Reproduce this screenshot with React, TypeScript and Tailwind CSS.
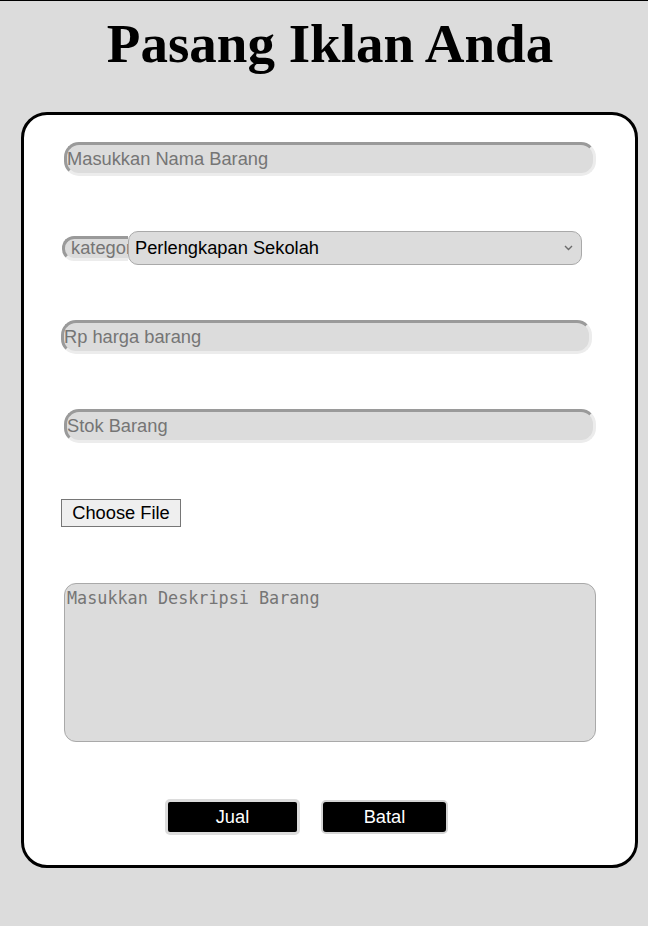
import React from "react";

const inset =
  "border-[3px] border-t-[#9a9a9a] border-l-[#9a9a9a] border-b-[#ececec] border-r-[#ececec] bg-[#dcdcdc] outline-none placeholder:text-[#757575] text-black";

export default function App() {
  return (
    <div className="w-[648px] h-[926px] bg-[#dcdcdc] border-t border-black flex flex-col" style={{ fontFamily: '"Liberation Sans", Arial, sans-serif' }}>
      <h1
        className="mt-[13px] pl-[12px] text-center text-[55px] font-bold leading-[60px] text-black"
        style={{ fontFamily: '"Liberation Serif", "Times New Roman", serif' }}
      >
        Pasang Iklan Anda
      </h1>
      <div className="mt-[38px] ml-[21px] w-[617px] h-[756px] bg-white border-[3px] border-black rounded-[26px] flex flex-col">
        <input
          className={`mt-[27px] ml-[40px] w-[532px] h-[34px] rounded-[15px] px-0 text-[18.3px] ${inset}`}
          placeholder="Masukkan Nama Barang"
        />
        <div className="mt-[55px] ml-[38px] flex items-center h-[34px]">
          <input
            className={`w-[66px] h-[25px] rounded-l-[12px] border-r-0 pl-[6px] text-[18.3px] ${inset}`}
            placeholder="kategori"
          />
          <div className="relative">
            <select
              className="appearance-none w-[454px] h-[34px] border border-[#a9a9a9] rounded-[10px] bg-[#dcdcdc] pl-[6px] text-[18.3px] text-black outline-none"
              defaultValue="Perlengkapan Sekolah"
            >
              <option>Perlengkapan Sekolah</option>
              <option>Elektronik</option>
              <option>Pakaian</option>
            </select>
            <svg className="absolute right-[9px] top-[14px] pointer-events-none" width="9" height="6" viewBox="0 0 9 6">
              <path d="M1 1 L4.5 4.5 L8 1" fill="none" stroke="#6b6b6b" strokeWidth="1.4" />
            </svg>
          </div>
        </div>
        <input
          className={`mt-[55px] ml-[37px] w-[531px] h-[34px] rounded-[15px] px-0 text-[18.3px] ${inset}`}
          placeholder="Rp harga barang"
        />
        <input
          className={`mt-[55px] ml-[40px] w-[532px] h-[34px] rounded-[15px] px-0 text-[18.3px] ${inset}`}
          placeholder="Stok Barang"
        />
        <div className="mt-[56px] ml-[37px]">
          <button className="w-[120px] h-[28px] border border-[#767676] bg-[#efefef] text-[18.3px] text-black leading-none">
            Choose File
          </button>
        </div>
        <textarea
          className="mt-[56px] ml-[40px] w-[532px] h-[159px] border border-[#a9a9a9] rounded-[12px] bg-[#dcdcdc] p-[2px] text-[16.8px] resize-none outline-none placeholder:text-[#757575]"
          style={{ fontFamily: '"DejaVu Sans Mono", monospace' }}
          placeholder="Masukkan Deskripsi Barang"
        />
        <div className="mt-[57px] ml-[141px] flex items-center gap-[21px]">
          <button className="w-[135px] h-[36px] bg-black text-white border-[3px] border-[#dcdcdc] rounded-[5px] text-[18.3px]">
            Jual
          </button>
          <button className="w-[127px] h-[34px] bg-black text-white border-2 border-[#d4d4d4] rounded-[5px] text-[18.3px]">
            Batal
          </button>
        </div>
      </div>
    </div>
  );
}
